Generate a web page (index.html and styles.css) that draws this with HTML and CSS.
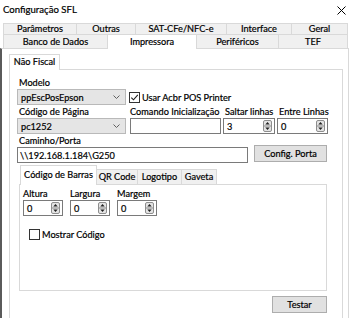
FILE: index.html
```html
<!DOCTYPE html>
<html lang="pt">
<head>
<meta charset="utf-8">
<title>Configuração SFL</title>
<link rel="stylesheet" href="styles.css">
</head>
<body>
<div class="win">
  <header class="titlebar">
    <span class="title">Configuração SFL</span>
    <svg class="close" width="9" height="9" viewBox="0 0 9 9"><path d="M0.5 0.5 L8.5 8.5 M8.5 0.5 L0.5 8.5" stroke="#000" stroke-width="1" fill="none"/></svg>
  </header>
  <div class="tabrow row1">
    <div class="tab t-param">Parâmetros</div>
    <div class="tab t-outras">Outras</div>
    <div class="tab t-sat">SAT-CFe/NFC-e</div>
    <div class="tab t-interface">Interface</div>
    <div class="tab t-geral">Geral</div>
  </div>
  <div class="tabrow row2">
    <div class="tab t-banco">Banco de Dados</div>
    <div class="tab t-impr active">Impressora</div>
    <div class="tab t-perif">Periféricos</div>
    <div class="tab t-tef">TEF</div>
  </div>
  <main class="page">
    <div class="nf-tabs"><div class="nf-tab">Não Fiscal</div></div>
    <section class="nf-page">
      <div class="lbl">Modelo</div>
      <div class="row-modelo">
        <div class="combo combo-w"><span>ppEscPosEpson</span><svg class="chev" width="7" height="4" viewBox="0 0 7 4"><path d="M0.5 0.5 L3.5 3.5 L6.5 0.5" stroke="#606060" fill="none"/></svg></div>
        <label class="check"><span class="box"><svg width="9" height="9" viewBox="0 0 9 9"><path d="M1.3 4.6 L3.5 6.8 L7.8 1.8" stroke="#1e1e1e" stroke-width="1.1" fill="none"/></svg></span>Usar Acbr POS Printer</label>
      </div>
      <div class="grid4">
        <div class="lbl">Código de Página</div>
        <div class="lbl lbl-flush">Comando Inicialização</div>
        <div class="lbl">Saltar linhas</div>
        <div class="lbl">Entre Linhas</div>
        <div class="combo combo-w"><span>pc1252</span><svg class="chev" width="7" height="4" viewBox="0 0 7 4"><path d="M0.5 0.5 L3.5 3.5 L6.5 0.5" stroke="#606060" fill="none"/></svg></div>
        <div class="input cmd"></div>
        <div class="input spin w52"><span>3</span><svg class="spinbtn" width="9" height="12" viewBox="0 0 9 12"><rect x="0.5" y="0.5" width="8" height="11" rx="1.5" fill="#e4e4e4" stroke="#8e8e8e"/><path d="M1 6 H8" stroke="#8e8e8e"/><path d="M2.3 4.6 L4.5 2 L6.7 4.6 Z" fill="#202020"/><path d="M2.3 7.4 L4.5 10 L6.7 7.4 Z" fill="#202020"/></svg></div>
        <div class="input spin w51"><span>0</span><svg class="spinbtn" width="9" height="12" viewBox="0 0 9 12"><rect x="0.5" y="0.5" width="8" height="11" rx="1.5" fill="#e4e4e4" stroke="#8e8e8e"/><path d="M1 6 H8" stroke="#8e8e8e"/><path d="M2.3 4.6 L4.5 2 L6.7 4.6 Z" fill="#202020"/><path d="M2.3 7.4 L4.5 10 L6.7 7.4 Z" fill="#202020"/></svg></div>
      </div>
      <div class="lbl">Caminho/Porta</div>
      <div class="row-path">
        <div class="input path">\\192.168.1.184\G250</div>
        <button class="btn config">Config. Porta</button>
      </div>
      <div class="cb-tabs">
        <div class="ctab ctab-cb active">Código de Barras</div>
        <div class="ctab ctab-qr">QR Code</div>
        <div class="ctab ctab-logo">Logotipo</div>
        <div class="ctab ctab-gav">Gaveta</div>
      </div>
      <div class="cb-page">
        <div class="cb-grid">
          <div class="lbl2">Altura</div>
          <div class="lbl2">Largura</div>
          <div class="lbl2">Margem</div>
          <div class="input spin w40"><span>0</span><svg class="spinbtn" width="9" height="12" viewBox="0 0 9 12"><rect x="0.5" y="0.5" width="8" height="11" rx="1.5" fill="#e4e4e4" stroke="#8e8e8e"/><path d="M1 6 H8" stroke="#8e8e8e"/><path d="M2.3 4.6 L4.5 2 L6.7 4.6 Z" fill="#202020"/><path d="M2.3 7.4 L4.5 10 L6.7 7.4 Z" fill="#202020"/></svg></div>
          <div class="input spin w40"><span>0</span><svg class="spinbtn" width="9" height="12" viewBox="0 0 9 12"><rect x="0.5" y="0.5" width="8" height="11" rx="1.5" fill="#e4e4e4" stroke="#8e8e8e"/><path d="M1 6 H8" stroke="#8e8e8e"/><path d="M2.3 4.6 L4.5 2 L6.7 4.6 Z" fill="#202020"/><path d="M2.3 7.4 L4.5 10 L6.7 7.4 Z" fill="#202020"/></svg></div>
          <div class="input spin w40"><span>0</span><svg class="spinbtn" width="9" height="12" viewBox="0 0 9 12"><rect x="0.5" y="0.5" width="8" height="11" rx="1.5" fill="#e4e4e4" stroke="#8e8e8e"/><path d="M1 6 H8" stroke="#8e8e8e"/><path d="M2.3 4.6 L4.5 2 L6.7 4.6 Z" fill="#202020"/><path d="M2.3 7.4 L4.5 10 L6.7 7.4 Z" fill="#202020"/></svg></div>
        </div>
        <label class="check check-mc"><span class="box"></span>Mostrar Código</label>
      </div>
      <div class="actions"><button class="btn testar">Testar</button></div>
    </section>
  </main>
</div>
</body>
</html>
```

FILE: styles.css
```css
* { box-sizing: border-box; }
body { margin: 0; }
.win {
  width: 350px; height: 318px; overflow: hidden; background: #fff;
  font-family: Lato, "Liberation Sans", sans-serif; font-size: 9.2px; color: #000;
  -webkit-text-stroke: 0.2px #000;
  display: flex; flex-direction: column;
}
.titlebar {
  height: 23px; flex: none; display: flex; align-items: flex-start; justify-content: space-between;
  padding: 4px 4px 0 3px;
}
.title { font-size: 9.6px; line-height: 12px; }
.close { margin-top: 2px; }

.tabrow { display: flex; margin-left: 3px; width: 345px; flex: none; }
.row1 { height: 11px; }
.row2 { height: 14px; }
.tab {
  background: #f0f0f0; border: 1px solid #d9d9d9; border-bottom: none; border-left: none;
  text-align: center; white-space: nowrap;
}
.tabrow .tab:first-child { border-left: 1px solid #d9d9d9; }
.row1 .tab { line-height: 10px; height: 11px; }
.row2 .tab { line-height: 13px; height: 14px; }
.row2 .tab.active { background: #fff; height: 15px; margin-bottom: -1px; z-index: 1; }
.t-param { width: 74px; } .t-outras { width: 59px; } .t-sat { width: 91px; }
.t-interface { width: 65px; } .t-geral { width: 56px; }
.t-banco { width: 105px; } .t-impr { width: 89px; } .t-perif { width: 82px; } .t-tef { width: 69px; }

.page {
  flex: 1; width: 349px; background: #fff;
  border-top: 1px solid #d9d9d9; border-left: 2px solid #5a5a5a; border-right: 1px solid #d9d9d9;
  padding: 5px 0 0 7px; display: flex; flex-direction: column;
}
.nf-tabs { display: flex; flex: none; }
.nf-tab {
  width: 51px; height: 16px; margin-bottom: -1px; z-index: 1; background: #fff;
  border: 1px solid #d9d9d9; border-bottom: none; text-align: center; line-height: 14px;
}
.nf-page {
  flex: 1; width: 334px; border: 1px solid #d9d9d9; border-bottom: none;
  padding: 6px 15px 0 7px;
}
.lbl { height: 13px; line-height: 13px; padding-left: 2px; white-space: nowrap; }
.lbl-flush { padding-left: 0; }
.row-modelo { display: flex; align-items: center; height: 16px; }
.combo {
  height: 16px; background: #e5e5e5; border: 1px solid #b9b9b9;
  display: flex; align-items: center; justify-content: space-between; padding: 0 5px 0 3px;
}
.combo-w { width: 109px; }
.check { display: flex; align-items: center; white-space: nowrap; margin-left: 3px; }
.box {
  width: 11px; height: 11px; border: 1px solid #333; background: #fff; margin-right: 2px;
  display: flex; align-items: center; justify-content: center;
}
.grid4 { display: grid; grid-template-columns: 113px 93px 54px 51px; grid-template-rows: 13px 16px; }
.input {
  height: 16px; border: 1px solid #7a7a7a; background: #fff;
  display: flex; align-items: center; padding-left: 3px; white-space: nowrap;
}
.cmd { width: 91px; }
.spin { justify-content: space-between; padding-right: 2px; }
.w52 { width: 52px; } .w51 { width: 51px; } .w40 { width: 40px; }
.row-path { display: flex; align-items: flex-start; justify-content: space-between; height: 16px; }
.path { width: 231px; padding-left: 2px; }
.btn {
  font: inherit; color: #000; background: #e1e1e1; border: 1px solid #adadad; padding: 0;
  height: 17px; line-height: 15px; text-align: center;
}
.config { width: 73px; margin-top: -2px; }

.cb-tabs { display: flex; margin: 6px 0 0 3px; height: 15px; align-items: flex-end; }
.ctab {
  height: 15px; background: #f0f0f0; border: 1px solid #d9d9d9; border-bottom: none; border-left: none;
  text-align: center; line-height: 14px; white-space: nowrap;
}
.ctab:first-child { border-left: 1px solid #d9d9d9; }
.ctab.active { background: #fff; height: 20px; margin: -4px 0 -1px; padding-top: 2px; z-index: 1; }
.ctab-cb { width: 77px; } .ctab-qr { width: 41px; } .ctab-logo { width: 44px; } .ctab-gav { width: 35px; }
.cb-page {
  margin-left: 2px; width: 308px; height: 107px; border: 1px solid #d9d9d9; padding: 2px 0 0 3px;
}
.cb-grid { display: grid; grid-template-columns: 47px 47px 40px; grid-template-rows: 13px 16px; }
.lbl2 { line-height: 13px; white-space: nowrap; }
.check-mc { margin: 13px 0 0 6px; }
.actions { display: flex; justify-content: flex-end; margin-top: 5px; }
.testar { width: 55px; }
```
